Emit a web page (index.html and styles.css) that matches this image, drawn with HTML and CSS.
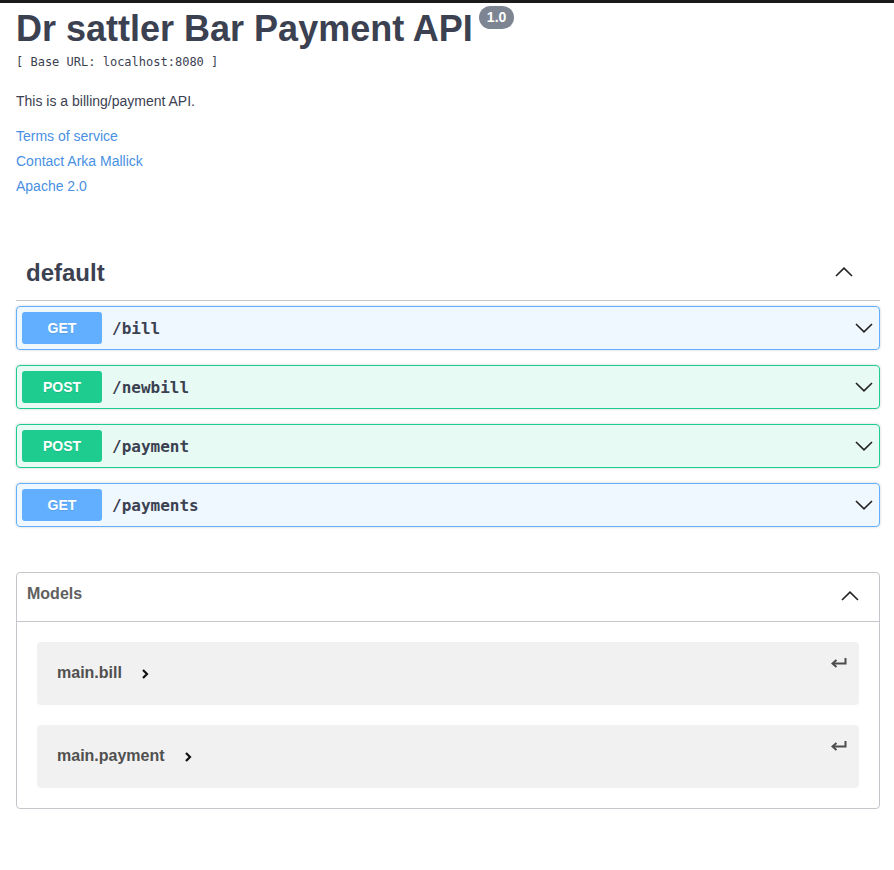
FILE: index.html
```html
<!DOCTYPE html>
<html lang="en">
<head>
<meta charset="utf-8">
<title>Dr sattler Bar Payment API</title>
<link rel="stylesheet" href="styles.css">
</head>
<body>
<div class="topbar"></div>
<div class="wrapper">
  <section class="info">
    <h2 class="title">Dr sattler Bar Payment API<span class="version">1.0</span></h2>
    <pre class="base-url">[ Base URL: localhost:8080 ]</pre>
    <p class="description">This is a billing/payment API.</p>
    <div class="links">
      <a class="link" href="#">Terms of service</a>
      <a class="link" href="#">Contact Arka Mallick</a>
      <a class="link" href="#">Apache 2.0</a>
    </div>
  </section>

  <section class="tag-section">
    <h3 class="tag">
      <span class="tag-name">default</span>
      <svg class="tag-arrow" width="18" height="10" viewBox="0 0 18 10"><polyline points="1,9 9,1.2 17,9" fill="none" stroke="#222" stroke-width="1.6"/></svg>
    </h3>
    <div class="opblock get">
      <div class="summary">
        <span class="method">GET</span>
        <span class="path">/bill</span>
        <svg class="op-arrow" width="18" height="10" viewBox="0 0 18 10"><polyline points="1,1 9,8.8 17,1" fill="none" stroke="#222" stroke-width="1.6"/></svg>
      </div>
    </div>
    <div class="opblock post">
      <div class="summary">
        <span class="method">POST</span>
        <span class="path">/newbill</span>
        <svg class="op-arrow" width="18" height="10" viewBox="0 0 18 10"><polyline points="1,1 9,8.8 17,1" fill="none" stroke="#222" stroke-width="1.6"/></svg>
      </div>
    </div>
    <div class="opblock post">
      <div class="summary">
        <span class="method">POST</span>
        <span class="path">/payment</span>
        <svg class="op-arrow" width="18" height="10" viewBox="0 0 18 10"><polyline points="1,1 9,8.8 17,1" fill="none" stroke="#222" stroke-width="1.6"/></svg>
      </div>
    </div>
    <div class="opblock get">
      <div class="summary">
        <span class="method">GET</span>
        <span class="path">/payments</span>
        <svg class="op-arrow" width="18" height="10" viewBox="0 0 18 10"><polyline points="1,1 9,8.8 17,1" fill="none" stroke="#222" stroke-width="1.6"/></svg>
      </div>
    </div>
  </section>

  <section class="models">
    <h4 class="models-head">
      <span>Models</span>
      <svg class="models-arrow" width="18" height="10" viewBox="0 0 18 10"><polyline points="1,9 9,1.2 17,9" fill="none" stroke="#222" stroke-width="1.6"/></svg>
    </h4>
    <div class="models-body">
      <div class="model-box">
        <span class="model-title">main.bill</span>
        <svg class="model-toggle" width="10" height="10" viewBox="0 0 10 10"><polyline points="3,1 7,5 3,9" fill="none" stroke="#111" stroke-width="2.2"/></svg>
        <svg class="jump" width="17" height="10" viewBox="0 0 17 10"><path d="M15.5 0 V5.5 H3" fill="none" stroke="#4d4d4d" stroke-width="2"/><polyline points="6.5,2 2.5,5.5 6.5,9" fill="none" stroke="#4d4d4d" stroke-width="2"/></svg>
      </div>
      <div class="model-box">
        <span class="model-title">main.payment</span>
        <svg class="model-toggle" width="10" height="10" viewBox="0 0 10 10"><polyline points="3,1 7,5 3,9" fill="none" stroke="#111" stroke-width="2.2"/></svg>
        <svg class="jump" width="17" height="10" viewBox="0 0 17 10"><path d="M15.5 0 V5.5 H3" fill="none" stroke="#4d4d4d" stroke-width="2"/><polyline points="6.5,2 2.5,5.5 6.5,9" fill="none" stroke="#4d4d4d" stroke-width="2"/></svg>
      </div>
    </div>
  </section>
</div>
</body>
</html>
```
FILE: styles.css
```css
html, body {
  margin: 0;
  padding: 0;
  background: #fff;
}
body {
  font-family: "Liberation Sans", Arial, sans-serif;
  color: #3b4151;
}
.topbar {
  height: 3px;
  background: #1b1b1b;
}
.wrapper {
  padding: 0 14px 40px 16px;
}
.title {
  margin: 6px 0 0;
  font-size: 36px;
  line-height: 40px;
  font-weight: 700;
  color: #3b4151;
  white-space: nowrap;
}
.version {
  display: inline-block;
  position: relative;
  top: -3px;
  vertical-align: top;
  margin-left: 6px;
  padding: 3px 8px;
  font-size: 14px;
  line-height: 17px;
  font-weight: 700;
  color: #fff;
  background: #7d8492;
  border-radius: 57px;
}
.base-url {
  margin: 5px 0 0;
  font-family: "DejaVu Sans Mono", monospace;
  font-size: 12px;
  line-height: 16px;
  color: #3b4151;
}
.description {
  margin: 21px 0 0;
  font-size: 14px;
  line-height: 20px;
}
.links {
  margin-top: 15px;
  display: flex;
  flex-direction: column;
  align-items: flex-start;
  gap: 5px;
}
.link {
  font-size: 14px;
  line-height: 20px;
  color: #4990e2;
  text-decoration: none;
}
.tag {
  margin: 55px 0 5px;
  height: 50px;
  box-sizing: border-box;
  border-bottom: 1px solid #c4c6cb;
  display: flex;
  align-items: center;
  justify-content: space-between;
  padding: 0 20px 5px 10px;
  font-size: 24px;
  line-height: 28px;
  font-weight: 700;
  color: #3b4151;
}
.tag-arrow {
  margin-right: 7px;
  margin-bottom: 2px;
}
.opblock {
  border: 1px solid;
  border-radius: 4px;
  box-shadow: 0 0 3px rgba(0, 0, 0, .19);
  margin-bottom: 15px;
}
.opblock.get {
  border-color: #61affe;
  background: rgba(97, 175, 254, .1);
}
.opblock.post {
  border-color: #1ecc90;
  background: rgba(30, 204, 144, .1);
}
.summary {
  display: flex;
  align-items: center;
  padding: 5px;
}
.method {
  width: 80px;
  height: 32px;
  line-height: 32px;
  border-radius: 3px;
  text-align: center;
  font-size: 14px;
  font-weight: 700;
  color: #fff;
  text-shadow: 0 1px 0 rgba(0, 0, 0, .1);
}
.get .method {
  background: #61affe;
}
.post .method {
  background: #1ecc90;
}
.path {
  margin-left: 10px;
  flex: 1;
  font-family: "DejaVu Sans Mono", monospace;
  font-size: 16px;
  font-weight: 700;
  color: #3b4151;
}
.op-arrow {
  margin-right: 1px;
}
.models {
  margin-top: 45px;
  border: 1px solid #c4c6cb;
  border-radius: 4px;
}
.models-head {
  margin: 0;
  height: 49px;
  box-sizing: border-box;
  border-bottom: 1px solid #c4c6cb;
  display: flex;
  align-items: center;
  justify-content: space-between;
  padding: 0 20px 6px 10px;
  font-size: 16px;
  line-height: 20px;
  font-weight: 700;
  color: #606060;
}
.models-arrow {
  margin-top: 3px;
}
.models-body {
  padding: 20px;
  display: flex;
  flex-direction: column;
  gap: 20px;
}
.model-box {
  height: 63px;
  box-sizing: border-box;
  display: flex;
  align-items: center;
  padding: 0 12px 2px 20px;
  background: #f1f1f1;
  border-radius: 4px;
}
.model-title {
  font-size: 16px;
  line-height: 20px;
  font-weight: 700;
  color: #505050;
}
.model-toggle {
  margin-left: 18px;
  margin-top: 2px;
}
.jump {
  margin-left: auto;
  align-self: flex-start;
  margin-top: 16px;
}
```
